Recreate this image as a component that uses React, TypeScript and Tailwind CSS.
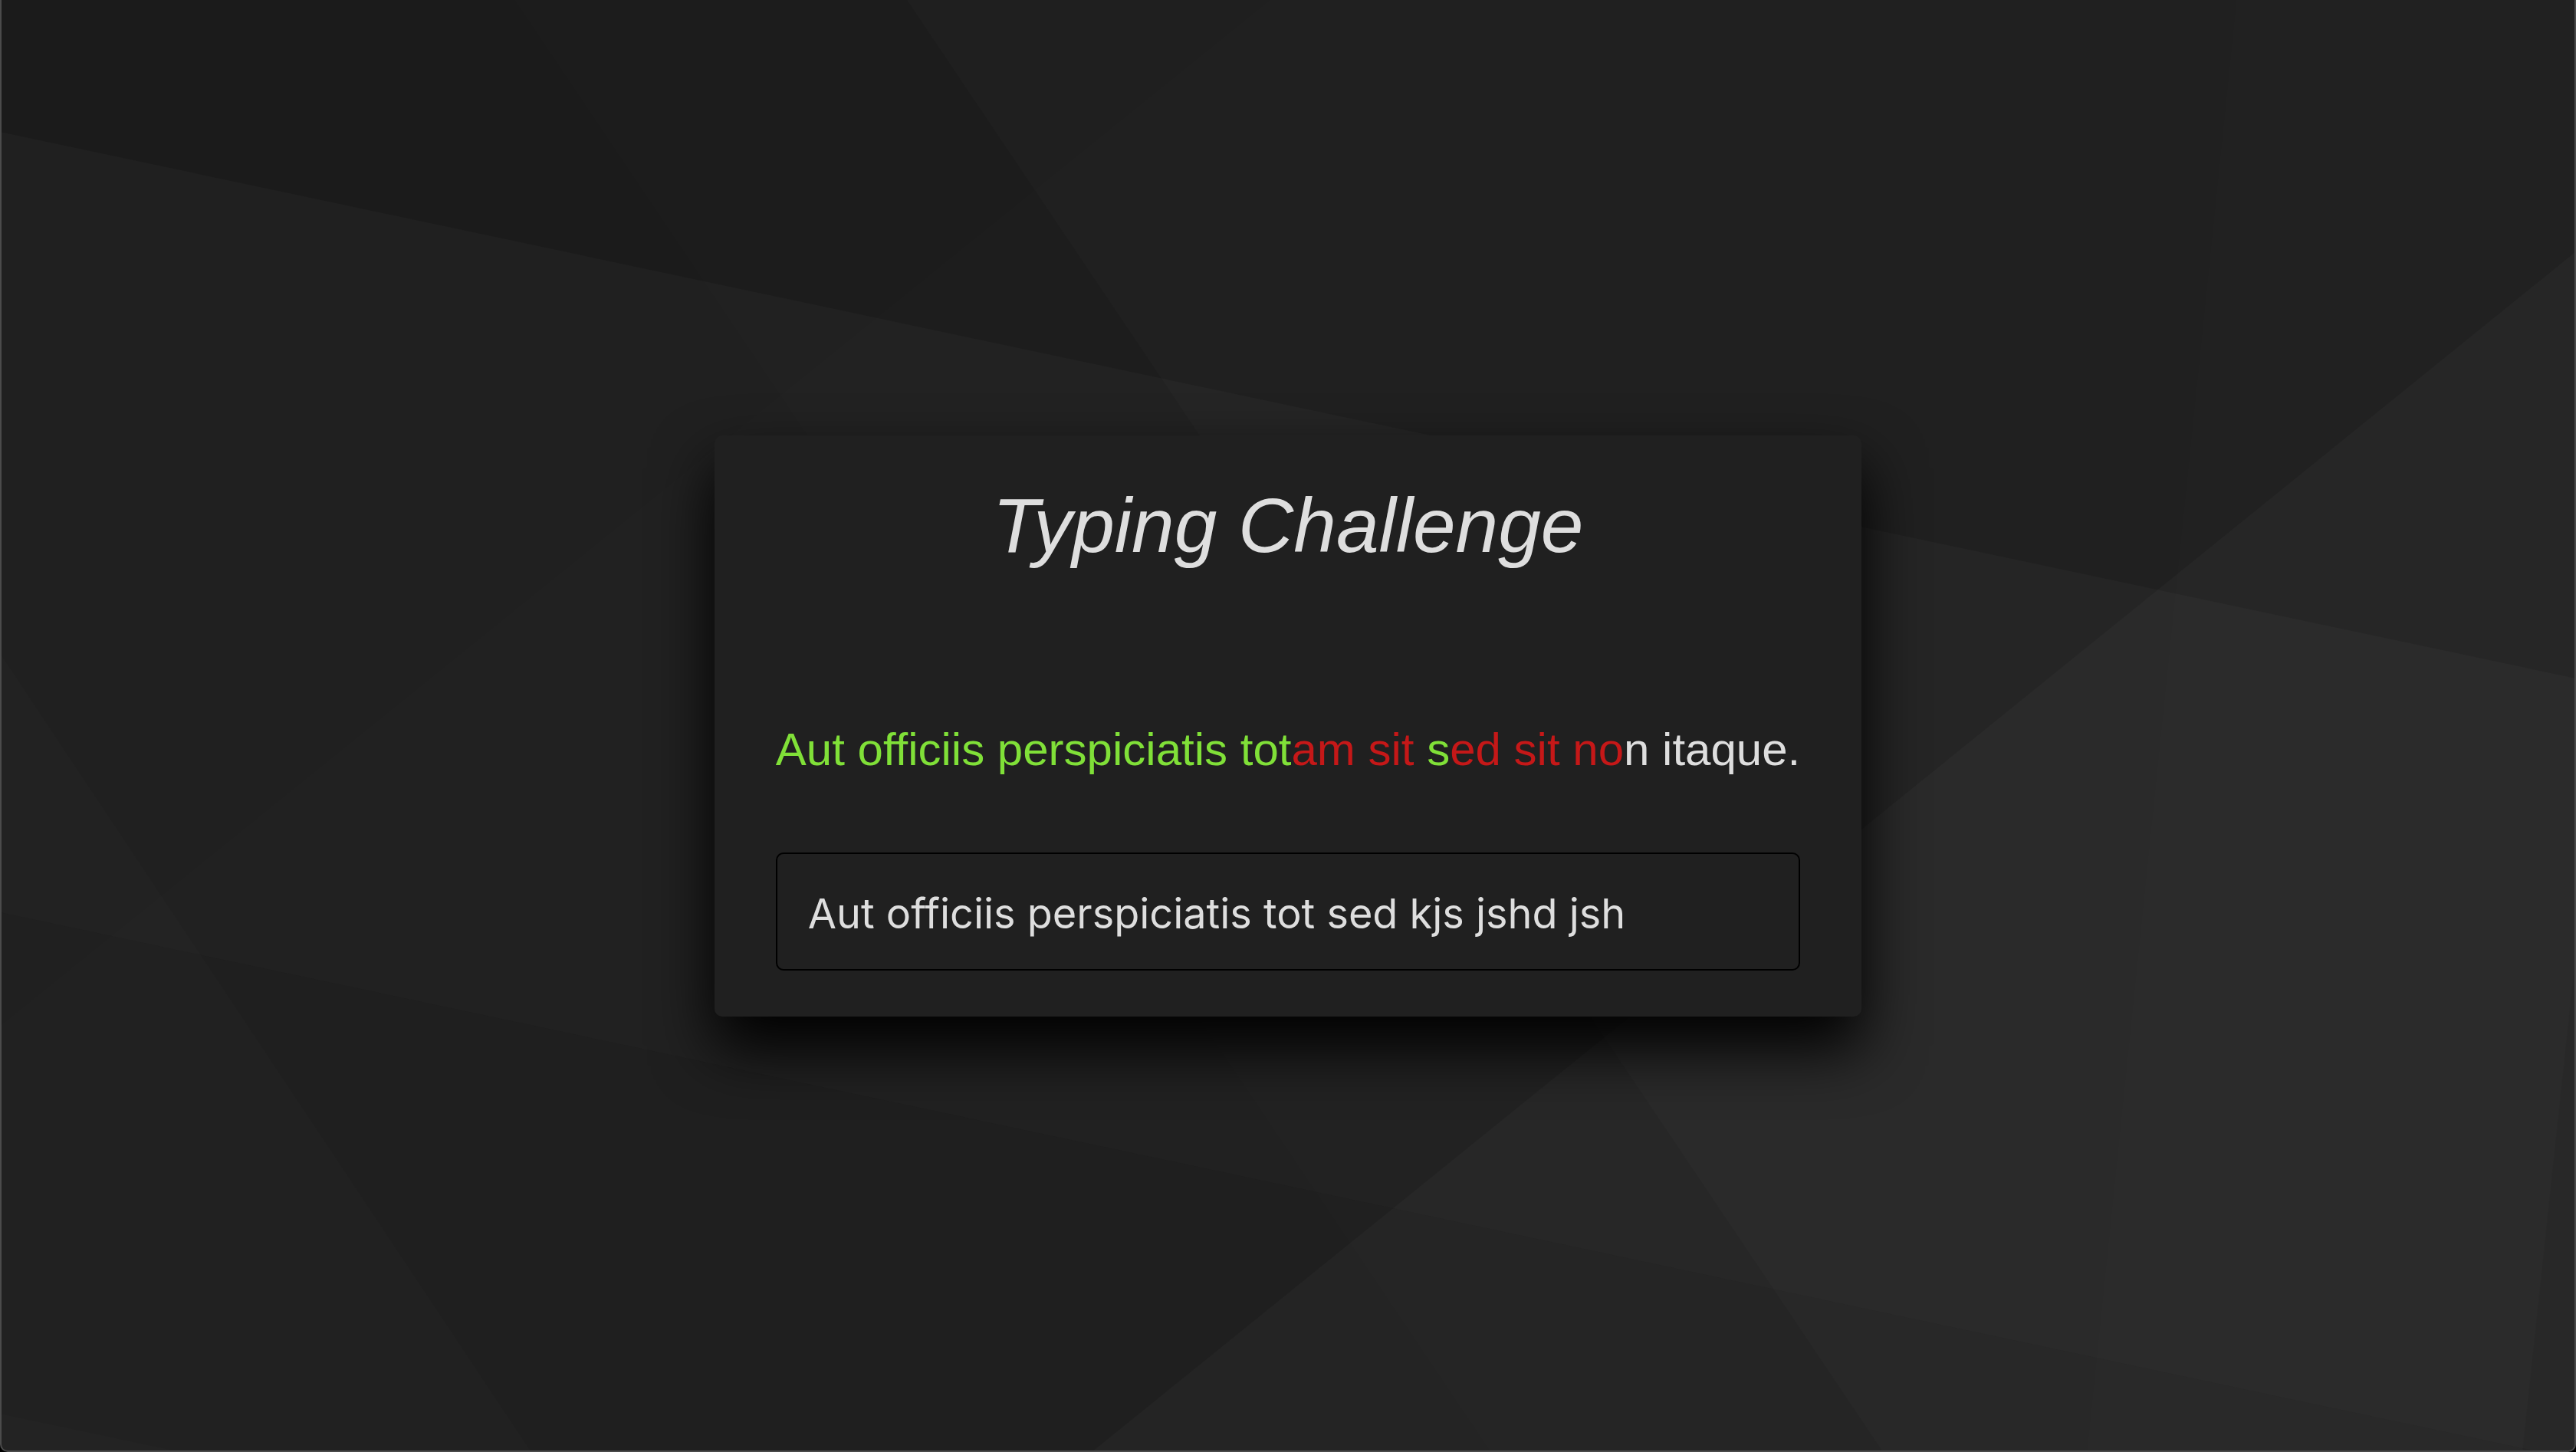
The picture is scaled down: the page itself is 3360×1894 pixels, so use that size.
import { useState } from "react";

const QUOTE = "Aut officiis perspiciatis totam sit sed sit non itaque.";
const INITIAL = "Aut officiis perspiciatis tot sed kjs jshd jsh";

/* Overlapping facets that lighten the page backdrop by a few levels each. */
const FACETS: { points: string; fill: string }[] = [
  { points: "0,172 3360,885 3360,1904 0,1190", fill: "#050505" },
  { points: "0,1190 3360,1904 0,1904", fill: "#030303" },
  { points: "0,1844 236,1894 0,1894", fill: "#020202" },
  { points: "671,0 3360,0 3360,1894 1944,1894", fill: "#010101" },
  { points: "1183,0 3360,0 3360,1894 2456,1894", fill: "#030303" },
  { points: "0,852 693,1894 0,1894", fill: "#020202" },
  { points: "1656,0 3360,0 3360,1894 0,1894 0,1338", fill: "#010101" },
  { points: "3360,328 3360,1894 1424,1894", fill: "#050505" },
  { points: "2917,0 3360,0 3360,1240 3290,1894 2722,1894", fill: "#010101" },
];

function Backdrop() {
  return (
    <svg
      aria-hidden="true"
      className="absolute inset-0 isolate h-full w-full"
      viewBox="0 0 3360 1894"
      preserveAspectRatio="none"
    >
      <rect width="3360" height="1894" fill="#1b1b1b" />
      {FACETS.map((facet) => (
        <polygon
          key={facet.points}
          points={facet.points}
          fill={facet.fill}
          className="mix-blend-plus-lighter"
        />
      ))}
      <polygon points="3360,1240 3360,1894 3290,1894" fill="#020202" className="mix-blend-difference" />
    </svg>
  );
}

function charClass(expected: string, typed: string | undefined) {
  if (typed === undefined) return "text-[#dedede]";
  return typed === expected ? "text-[#80e038]" : "text-[#c51818]";
}

function Quote({ text, typed }: { text: string; typed: string }) {
  return (
    <p className="mt-[200px] text-[60px] leading-[69px]">
      {text.split("").map((char, i) => (
        <span key={i} className={charClass(char, typed[i])}>
          {char}
        </span>
      ))}
    </p>
  );
}

export default function App() {
  const [typed, setTyped] = useState(INITIAL);

  return (
    <div className="min-h-screen bg-black font-['Liberation_Sans',Arial,sans-serif] text-[#dedede]">
      <main className="relative flex min-h-screen items-center justify-center overflow-hidden rounded-b-[10px] bg-[#1b1b1b]">
        <Backdrop />
        <div className="pointer-events-none absolute inset-0 rounded-b-[10px] border-x-2 border-b-2 border-[#4b4b4b]" />
        <section className="relative w-fit rounded-[10px] bg-[#202020] px-20 py-15 shadow-[0_40px_80px_#000]">
          <h1 className="text-center text-[100px] leading-[115px] italic">Typing Challenge</h1>
          <Quote text={QUOTE} typed={typed} />
          <input
            type="text"
            aria-label="Type the sentence"
            value={typed}
            onChange={(e) => setTyped(e.target.value)}
            className="mt-[100px] block h-[154px] w-full rounded-[10px] border-2 border-black bg-transparent px-10 pt-1 font-['Inter',sans-serif] text-[54px] outline-none"
          />
        </section>
      </main>
    </div>
  );
}
